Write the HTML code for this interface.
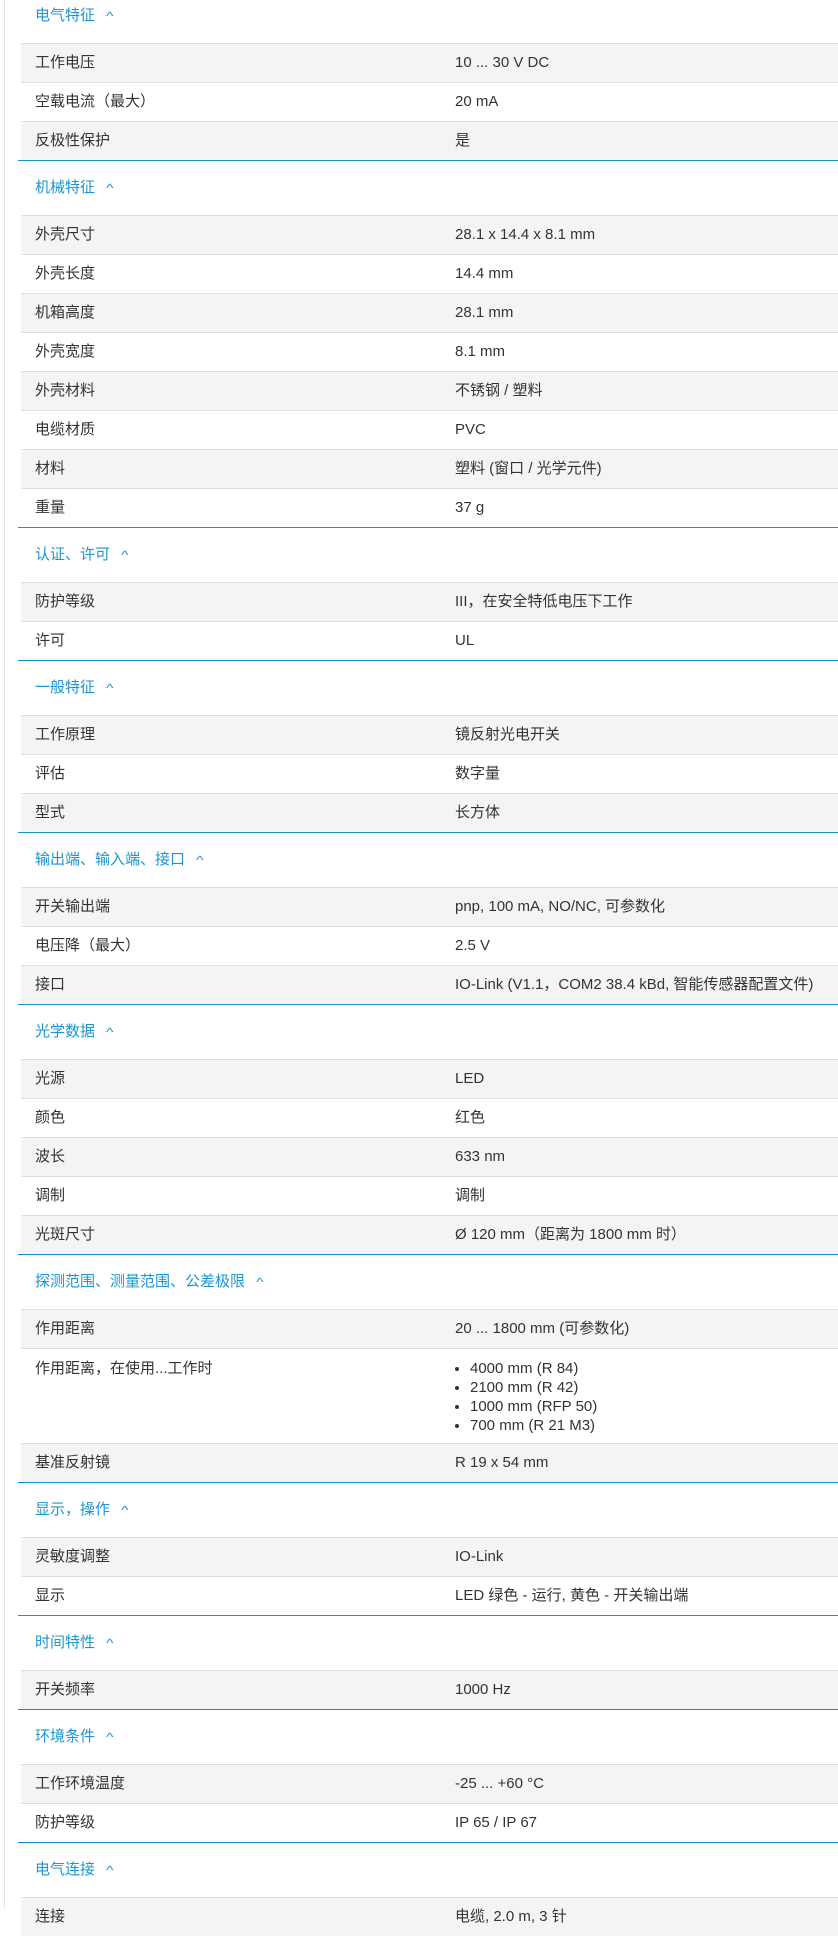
<!DOCTYPE html>
<html><head><meta charset="utf-8"><style>
body{margin:0;background:#fff;font-family:"Liberation Sans","Noto Sans CJK SC",sans-serif;font-size:15px;color:#333;width:838px;height:1909px;overflow:hidden;position:relative}
.lb{position:absolute;left:4px;top:0;bottom:0;width:1px;background:#e6e6e6}
.sec{margin-left:18px;border-bottom:1.5px solid #1a8fc4}
.h{height:54px;line-height:54px;padding-left:17px;color:#1a96d2;font-size:15px}
.h span{font-size:12px;margin-left:12px;display:inline-block;transform:scaleX(1.3)}
.first .h{height:43px;line-height:32px}
.r{display:flex;height:38px;line-height:38px;border-top:1px solid #dedede;margin-left:3px}
.r:nth-child(even){background:#f4f4f4}
.r:nth-child(odd){background:#fff}
.k{width:420px;padding-left:14px}
.v{flex:1}
.tall{height:94px;line-height:19px}
.tall .k,.tall .v{padding-top:10px}
ul{margin:0;padding-left:15px}
</style></head><body><div class="lb"></div>
<div class="sec first"><div class="h">电气特征<span>^</span></div>
<div class="r"><div class="k">工作电压</div><div class="v">10 ... 30 V DC</div></div>
<div class="r"><div class="k">空载电流（最大）</div><div class="v">20 mA</div></div>
<div class="r"><div class="k">反极性保护</div><div class="v">是</div></div></div>
<div class="sec"><div class="h">机械特征<span>^</span></div>
<div class="r"><div class="k">外壳尺寸</div><div class="v">28.1 x 14.4 x 8.1 mm</div></div>
<div class="r"><div class="k">外壳长度</div><div class="v">14.4 mm</div></div>
<div class="r"><div class="k">机箱高度</div><div class="v">28.1 mm</div></div>
<div class="r"><div class="k">外壳宽度</div><div class="v">8.1 mm</div></div>
<div class="r"><div class="k">外壳材料</div><div class="v">不锈钢 / 塑料</div></div>
<div class="r"><div class="k">电缆材质</div><div class="v">PVC</div></div>
<div class="r"><div class="k">材料</div><div class="v">塑料 (窗口 / 光学元件)</div></div>
<div class="r"><div class="k">重量</div><div class="v">37 g</div></div></div>
<div class="sec"><div class="h">认证、许可<span>^</span></div>
<div class="r"><div class="k">防护等级</div><div class="v">III，在安全特低电压下工作</div></div>
<div class="r"><div class="k">许可</div><div class="v">UL</div></div></div>
<div class="sec"><div class="h">一般特征<span>^</span></div>
<div class="r"><div class="k">工作原理</div><div class="v">镜反射光电开关</div></div>
<div class="r"><div class="k">评估</div><div class="v">数字量</div></div>
<div class="r"><div class="k">型式</div><div class="v">长方体</div></div></div>
<div class="sec"><div class="h">输出端、输入端、接口<span>^</span></div>
<div class="r"><div class="k">开关输出端</div><div class="v">pnp, 100 mA, NO/NC, 可参数化</div></div>
<div class="r"><div class="k">电压降（最大）</div><div class="v">2.5 V</div></div>
<div class="r"><div class="k">接口</div><div class="v">IO-Link (V1.1，COM2 38.4 kBd, 智能传感器配置文件)</div></div></div>
<div class="sec"><div class="h">光学数据<span>^</span></div>
<div class="r"><div class="k">光源</div><div class="v">LED</div></div>
<div class="r"><div class="k">颜色</div><div class="v">红色</div></div>
<div class="r"><div class="k">波长</div><div class="v">633 nm</div></div>
<div class="r"><div class="k">调制</div><div class="v">调制</div></div>
<div class="r"><div class="k">光斑尺寸</div><div class="v">Ø 120 mm（距离为 1800 mm 时）</div></div></div>
<div class="sec"><div class="h">探测范围、测量范围、公差极限<span>^</span></div>
<div class="r"><div class="k">作用距离</div><div class="v">20 ... 1800 mm (可参数化)</div></div>
<div class="r tall"><div class="k">作用距离，在使用...工作时</div><div class="v"><ul><li>4000 mm (R 84)</li><li>2100 mm (R 42)</li><li>1000 mm (RFP 50)</li><li>700 mm (R 21 M3)</li></ul></div></div>
<div class="r"><div class="k">基准反射镜</div><div class="v">R 19 x 54 mm</div></div></div>
<div class="sec"><div class="h">显示，操作<span>^</span></div>
<div class="r"><div class="k">灵敏度调整</div><div class="v">IO-Link</div></div>
<div class="r"><div class="k">显示</div><div class="v">LED 绿色 - 运行, 黄色 - 开关输出端</div></div></div>
<div class="sec"><div class="h">时间特性<span>^</span></div>
<div class="r"><div class="k">开关频率</div><div class="v">1000 Hz</div></div></div>
<div class="sec"><div class="h">环境条件<span>^</span></div>
<div class="r"><div class="k">工作环境温度</div><div class="v">-25 ... +60 °C</div></div>
<div class="r"><div class="k">防护等级</div><div class="v">IP 65 / IP 67</div></div></div>
<div class="sec" style="border:none"><div class="h">电气连接<span>^</span></div>
<div class="r"><div class="k">连接</div><div class="v">电缆, 2.0 m, 3 针</div></div></div>
</body></html>
